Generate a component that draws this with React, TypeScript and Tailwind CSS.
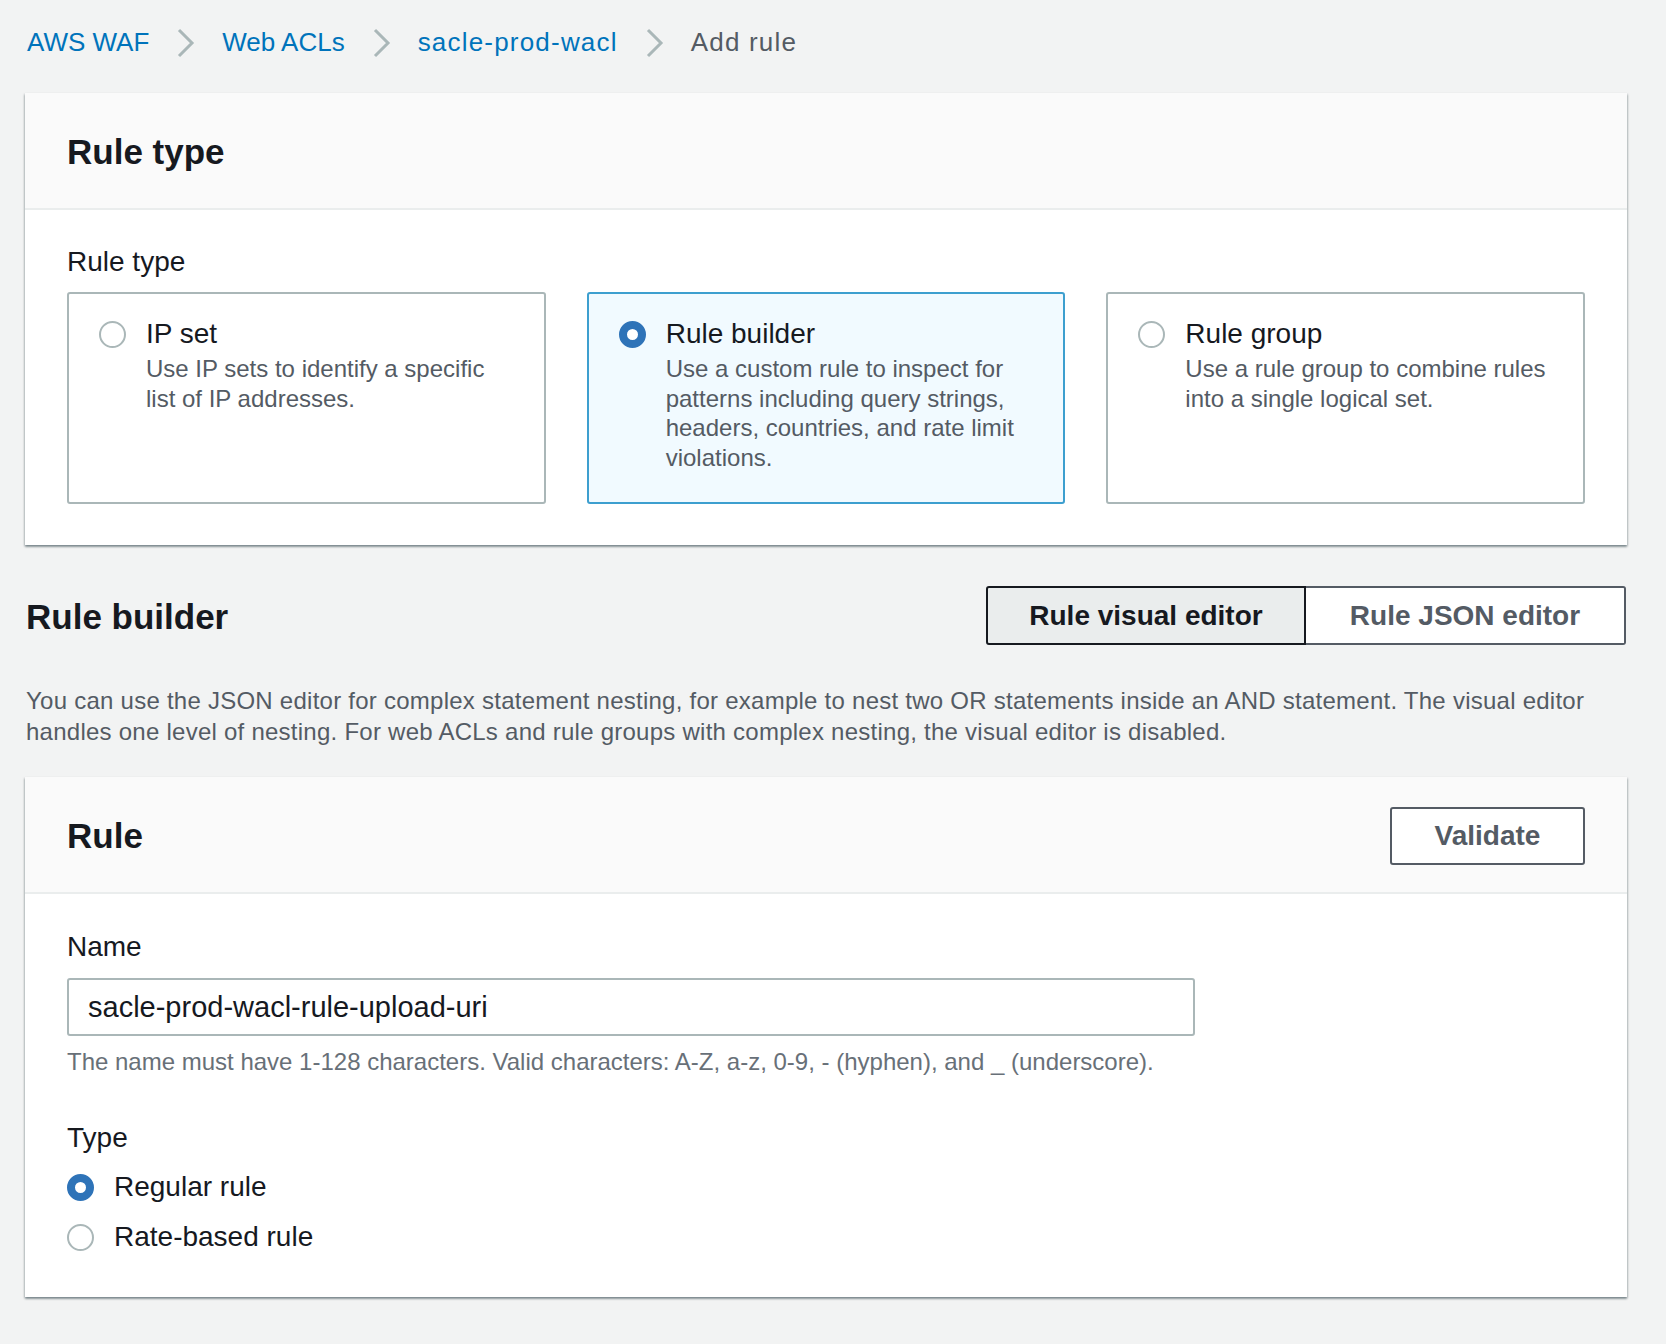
import React from 'react';

function Radio({ checked }: { checked: boolean }) {
  return checked ? (
    <span className="block h-[27px] w-[27px] shrink-0 rounded-full border-[8px] border-[#2e73b8] bg-white" />
  ) : (
    <span className="block h-[27px] w-[27px] shrink-0 rounded-full border-2 border-[#aab7b8] bg-white" />
  );
}

function Chevron() {
  return (
    <svg width="19" height="30" viewBox="0 0 19 30" className="shrink-0">
      <polyline points="3,2 16,15 3,28" fill="none" stroke="#aab7b8" strokeWidth="3" />
    </svg>
  );
}

function Tile({ title, desc, selected }: { title: string; desc: string; selected?: boolean }) {
  return (
    <div
      className={`flex h-[212px] w-[479px] rounded-[3px] border-2 pl-[30px] pr-[30px] pt-[23px] ${
        selected ? 'border-[#3d9fcf] bg-[#f1faff]' : 'border-[#aab7b8] bg-white'
      }`}
    >
      <div className="mt-[4px]">
        <Radio checked={!!selected} />
      </div>
      <div className="ml-[20px] flex-1">
        <div className="text-[28px] leading-[34px] text-[#16191f]">{title}</div>
        <div className="mt-[3px] text-[24px] leading-[29.7px] text-[#545b64]">{desc}</div>
      </div>
    </div>
  );
}

const cardShadow =
  'shadow-[0_2px_2px_0_rgba(0,28,36,0.35),1px_1px_2px_0_rgba(0,28,36,0.15),-1px_1px_2px_0_rgba(0,28,36,0.15)]';

export default function App() {
  return (
    <div className="min-h-[1344px] w-[1666px] bg-[#f2f3f3] pl-[25px] pr-[39px] font-['Liberation_Sans',Arial,sans-serif]">
      {/* breadcrumb */}
      <nav className="flex h-[85px] items-center gap-[27px] pl-[2px] text-[26px]">
        <span className="text-[#0073bb]">AWS WAF</span>
        <Chevron />
        <span className="text-[#0073bb]">Web ACLs</span>
        <Chevron />
        <span className="tracking-[1.2px] text-[#0073bb]">sacle-prod-wacl</span>
        <Chevron />
        <span className="tracking-[1.2px] text-[#545b64]">Add rule</span>
      </nav>

      {/* Rule type card */}
      <section className={`mt-[8px] bg-white ${cardShadow}`}>
        <div className="flex h-[117px] items-center border-b-2 border-[#eaeded] bg-[#fafafa] px-[42px] pt-[3px]">
          <h2 className="text-[35px] font-bold leading-[44px] text-[#16191f]">Rule type</h2>
        </div>
        <div className="px-[42px] pb-[41px] pt-[37px]">
          <div className="text-[28px] leading-[30px] text-[#16191f]">Rule type</div>
          <div className="mt-[15px] flex gap-[41px]">
            <Tile title="IP set" desc="Use IP sets to identify a specific list of IP addresses." />
            <Tile
              selected
              title="Rule builder"
              desc="Use a custom rule to inspect for patterns including query strings, headers, countries, and rate limit violations."
            />
            <Tile title="Rule group" desc="Use a rule group to combine rules into a single logical set." />
          </div>
        </div>
      </section>

      {/* Rule builder */}
      <div className="mt-[41px] flex h-[59px] items-center justify-between pl-[1px]">
        <h2 className="pt-[2px] text-[35px] font-bold leading-[44px] text-[#16191f]">Rule builder</h2>
        <div className="flex pr-[1px]">
          <button className="flex h-[59px] w-[320px] items-center justify-center rounded-l-[3px] border-2 border-[#16191f] bg-[#eaeded] text-[28px] font-bold text-[#16191f]">
            Rule visual editor
          </button>
          <button className="flex h-[59px] w-[320px] items-center justify-center rounded-r-[3px] border-2 border-l-0 border-[#545b64] bg-white text-[28px] font-bold text-[#545b64]">
            Rule JSON editor
          </button>
        </div>
      </div>

      <p className="mt-[41px] pl-[1px] text-[24px] leading-[30.5px] tracking-[0.25px] text-[#545b64]">
        You can use the JSON editor for complex statement nesting, for example to nest two OR statements inside an AND
        statement. The visual editor handles one level of nesting. For web ACLs and rule groups with complex nesting,
        the visual editor is disabled.
      </p>

      {/* Rule card */}
      <section className={`mt-[30px] bg-white ${cardShadow}`}>
        <div className="flex h-[117px] items-center justify-between border-b-2 border-[#eaeded] bg-[#fafafa] px-[42px] pt-[3px]">
          <h2 className="text-[35px] font-bold leading-[44px] text-[#16191f]">Rule</h2>
          <button className="flex h-[58px] w-[195px] items-center justify-center rounded-[3px] border-2 border-[#545b64] bg-white text-[28px] font-bold text-[#545b64]">
            Validate
          </button>
        </div>
        <div className="px-[42px] pb-[40px] pt-[38px]">
          <div className="text-[28px] leading-[30px] text-[#16191f]">Name</div>
          <div className="mt-[16px] flex h-[58px] w-[1128px] items-center rounded-[3px] border-2 border-[#aab7b8] bg-white pl-[19px] pt-[2px] text-[29px] text-[#16191f]">
            sacle-prod-wacl-rule-upload-uri
          </div>
          <div className="mt-[12px] text-[24px] leading-[28px] text-[#687078]">
            The name must have 1-128 characters. Valid characters: A-Z, a-z, 0-9, - (hyphen), and _ (underscore).
          </div>
          <div className="mt-[47px] text-[28px] leading-[30px] text-[#16191f]">Type</div>
          <div className="mt-[14px] flex h-[40px] items-center gap-[20px]">
            <Radio checked />
            <span className="text-[28px] text-[#16191f]">Regular rule</span>
          </div>
          <div className="mt-[10px] flex h-[40px] items-center gap-[20px]">
            <Radio checked={false} />
            <span className="text-[28px] text-[#16191f]">Rate-based rule</span>
          </div>
        </div>
      </section>
    </div>
  );
}
